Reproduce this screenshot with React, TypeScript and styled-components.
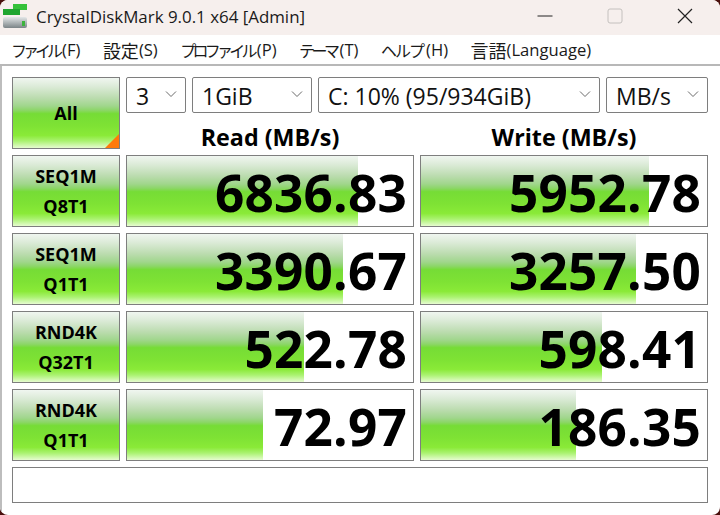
import { Fragment } from 'react';
import { createGlobalStyle, styled } from 'styled-components';

const GlobalStyle = createGlobalStyle`
  html, body {
    margin: 0;
    padding: 0;
    background: #4a0f0c;
  }
  * {
    box-sizing: border-box;
  }
`;

const BAR_GRADIENT = `linear-gradient(180deg,
  #f0f6f0 0%, #dcebd8 12%, #bcdcb0 28%, #a0d68c 40%, #8cd668 46%, #76dc36 51%, #7ee234 68%, #8aea38 82%, #aaf270 90%, #e6fcd0 100%)`;

const Window = styled.div`
  width: 720px;
  height: 515px;
  display: flex;
  flex-direction: column;
  border-radius: 8px;
  overflow: hidden;
  background: #fff;
  font-family: "Open Sans", "Noto Sans CJK JP", sans-serif;
  color: #000;
`;

const TitleBar = styled.div`
  height: 35px;
  flex: none;
  display: flex;
  align-items: center;
  background: #f6efed;
  padding: 0 0 3px 3px;
`;

const AppIcon = styled.svg`
  width: 24px;
  height: 24px;
  flex: none;
`;

const Title = styled.div`
  margin-left: 9px;
  font-size: 16.9px;
  color: #1a1a1a;
  white-space: nowrap;
  flex: 1;
`;

const CaptionButton = styled.div`
  width: 70px;
  height: 32px;
  display: flex;
  align-items: center;
  justify-content: center;
`;

const MenuBar = styled.div`
  height: 31px;
  flex: none;
  display: flex;
  align-items: center;
  background: #fff;
  padding-left: 11px;
  gap: 22.5px;
  color: #1a1a1a;
  border-bottom: 2px solid #b8b8b8;
  white-space: nowrap;
`;

const MenuItem = styled.span`
  display: flex;
  align-items: center;
  font-size: 16.6px;
`;

const MenuGlyphs = styled.span<{ $tracking: number }>`
  font-size: ${(p) => (p.$tracking < 0 ? '16px' : '18px')};
  letter-spacing: ${(p) => p.$tracking}px;
  padding-right: ${(p) => (p.$tracking < 0 ? '3px' : '0')};
`;

const Body = styled.div`
  flex: 1;
  display: grid;
  grid-template-columns: 108px 288px 288px;
  grid-template-rows: repeat(5, 72px) 36px;
  gap: 6px;
  padding: 11px 0 0 10px;
  border-left: 2px solid #bdbdbd;
`;

const RunButton = styled.div<{ $corner?: boolean }>`
  position: relative;
  border: 1px solid #7e7e7e;
  background: ${BAR_GRADIENT};
  display: flex;
  flex-direction: column;
  align-items: center;
  justify-content: center;
  gap: 3px;
  font-weight: 700;
  font-size: 18px;
  line-height: 27px;
  color: #000;
  &::after {
    content: '';
    display: ${(p) => (p.$corner ? 'block' : 'none')};
    position: absolute;
    right: 0;
    bottom: 0;
    border-style: solid;
    border-width: 0 0 14px 14px;
    border-color: transparent transparent #ff7a0a transparent;
  }
`;

const Controls = styled.div`
  grid-column: 2 / 4;
  display: grid;
  grid-template-columns: 60px 120px 282px 102px;
  grid-template-rows: 36px 1fr;
  column-gap: 6px;
`;

const Select = styled.div`
  height: 36px;
  border: 1px solid #7e7e7e;
  border-radius: 2px;
  background: #fff;
  display: flex;
  align-items: center;
  justify-content: space-between;
  padding: 1px 8px 0 9px;
  font-size: 23px;
  color: #111;
  white-space: nowrap;
`;

const Chevron = styled.svg`
  width: 12px;
  height: 8px;
  flex: none;
  margin-bottom: 3px;
`;

const Headers = styled.div`
  grid-column: 1 / 5;
  display: grid;
  grid-template-columns: 288px 288px;
  column-gap: 6px;
`;

const Header = styled.div`
  text-align: center;
  font-weight: 700;
  font-size: 23.3px;
  line-height: 24px;
  padding-top: 12px;
`;

const Result = styled.div<{ $fill: number }>`
  border: 1px solid #7e7e7e;
  background: ${BAR_GRADIENT} no-repeat left top / ${(p) => p.$fill}px 100%, #fff;
  display: flex;
  align-items: center;
  justify-content: flex-end;
  padding: 3px 6px 0 0;
  font-weight: 700;
  font-size: 51.3px;
  line-height: 1;
  letter-spacing: 0.2px;
`;

const Status = styled.div`
  grid-column: 1 / 4;
  border: 1px solid #7e7e7e;
  background: #fff;
`;

const ROWS = [
  { name: 'SEQ1M', sub: 'Q8T1', read: '6836.83', readFill: 231, write: '5952.78', writeFill: 228 },
  { name: 'SEQ1M', sub: 'Q1T1', read: '3390.67', readFill: 216, write: '3257.50', writeFill: 215 },
  { name: 'RND4K', sub: 'Q32T1', read: '522.78', readFill: 177, write: '598.41', writeFill: 181 },
  { name: 'RND4K', sub: 'Q1T1', read: '72.97', readFill: 136, write: '186.35', writeFill: 155 },
];

const MENUS = [
  { glyphs: 'ファイル', latin: '(F)', tracking: -4 },
  { glyphs: '設定', latin: '(S)', tracking: 0 },
  { glyphs: 'プロファイル', latin: '(P)', tracking: -3.75 },
  { glyphs: 'テーマ', latin: '(T)', tracking: -3.5 },
  { glyphs: 'ヘルプ', latin: '(H)', tracking: -2 },
  { glyphs: '言語', latin: '(Language)', tracking: 0 },
];

const SELECTS = ['3', '1GiB', 'C: 10% (95/934GiB)', 'MB/s'];

function ChevronIcon() {
  return (
    <Chevron viewBox="0 0 12 8">
      <path d="M1 1.5 L6 6.5 L11 1.5" fill="none" stroke="#6a6a6a" strokeWidth="1" />
    </Chevron>
  );
}

function App() {
  return (
    <Window>
      <GlobalStyle />
      <TitleBar>
        <AppIcon viewBox="0 0 24 24">
          <defs>
            <linearGradient id="disk" x1="0" y1="0" x2="0" y2="1">
              <stop offset="0" stopColor="#e4e7e8" />
              <stop offset="1" stopColor="#7b8487" />
            </linearGradient>
          </defs>
          <rect x="0" y="13" width="24" height="11" rx="2" fill="url(#disk)" />
          <rect x="19" y="17" width="3" height="5" fill="#3db33d" />
          <rect x="10" y="0" width="14" height="6" fill="#35c13a" />
          <rect x="0" y="5" width="17" height="6" fill="#1fa52f" />
        </AppIcon>
        <Title>CrystalDiskMark 9.0.1 x64 [Admin]</Title>
        <CaptionButton>
          <svg width="16" height="16" viewBox="0 0 16 16">
            <path d="M0.5 8 H15.5" stroke="#222" strokeWidth="1" />
          </svg>
        </CaptionButton>
        <CaptionButton>
          <svg width="16" height="16" viewBox="0 0 16 16">
            <rect x="1" y="1" width="14" height="14" rx="2" fill="none" stroke="#c4c0be" strokeWidth="1" />
          </svg>
        </CaptionButton>
        <CaptionButton>
          <svg width="16" height="16" viewBox="0 0 16 16">
            <path d="M1 1 L15 15 M15 1 L1 15" stroke="#222" strokeWidth="1.2" />
          </svg>
        </CaptionButton>
      </TitleBar>
      <MenuBar>
        {MENUS.map((m) => (
          <MenuItem key={m.glyphs}>
            <MenuGlyphs $tracking={m.tracking}>{m.glyphs}</MenuGlyphs>
            {m.latin}
          </MenuItem>
        ))}
      </MenuBar>
      <Body>
        <RunButton $corner>All</RunButton>
        <Controls>
          {SELECTS.map((s) => (
            <Select key={s}>
              {s}
              <ChevronIcon />
            </Select>
          ))}
          <Headers>
            <Header>Read (MB/s)</Header>
            <Header>Write (MB/s)</Header>
          </Headers>
        </Controls>
        {ROWS.map((r) => (
          <Fragment key={r.name + r.sub}>
            <RunButton>
              <span>{r.name}</span>
              <span>{r.sub}</span>
            </RunButton>
            <Result $fill={r.readFill}>{r.read}</Result>
            <Result $fill={r.writeFill}>{r.write}</Result>
          </Fragment>
        ))}
        <Status />
      </Body>
    </Window>
  );
}

export default App;
